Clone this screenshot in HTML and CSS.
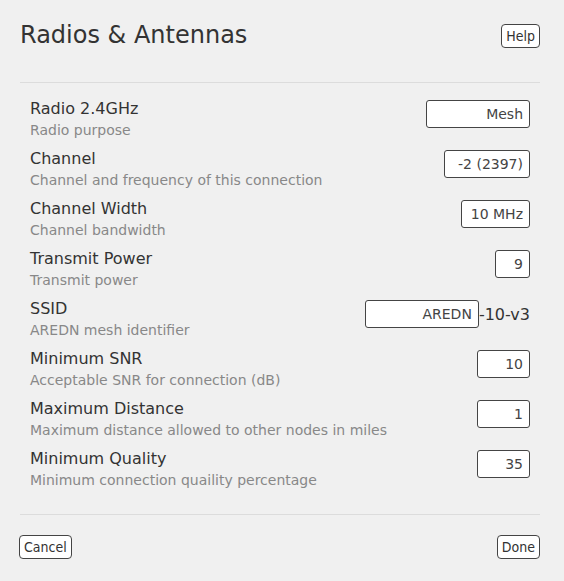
FILE: index.html
```html
<!DOCTYPE html>
<html>
<head>
<meta charset="utf-8">
<link rel="stylesheet" href="styles.css">
</head>
<body>
<div class="dialog">
  <div class="header">
    <div class="title">Radios &amp; Antennas</div>
    <button class="btn">Help</button>
  </div>
  <div class="sep"></div>
  <div class="rows">
    <div class="row">
      <div class="text"><div class="label">Radio 2.4GHz</div><div class="desc">Radio purpose</div></div>
      <div class="ctrl"><div class="field w-mesh">Mesh</div></div>
    </div>
    <div class="row">
      <div class="text"><div class="label">Channel</div><div class="desc">Channel and frequency of this connection</div></div>
      <div class="ctrl"><div class="field w-chan">-2 (2397)</div></div>
    </div>
    <div class="row">
      <div class="text"><div class="label">Channel Width</div><div class="desc">Channel bandwidth</div></div>
      <div class="ctrl"><div class="field w-bw">10 MHz</div></div>
    </div>
    <div class="row">
      <div class="text"><div class="label">Transmit Power</div><div class="desc">Transmit power</div></div>
      <div class="ctrl"><div class="field w-pow">9</div></div>
    </div>
    <div class="row">
      <div class="text"><div class="label">SSID</div><div class="desc">AREDN mesh identifier</div></div>
      <div class="ctrl"><div class="field w-ssid">AREDN</div><span class="suffix">-10-v3</span></div>
    </div>
    <div class="row">
      <div class="text"><div class="label">Minimum SNR</div><div class="desc">Acceptable SNR for connection (dB)</div></div>
      <div class="ctrl"><div class="field w-num">10</div></div>
    </div>
    <div class="row">
      <div class="text"><div class="label">Maximum Distance</div><div class="desc">Maximum distance allowed to other nodes in miles</div></div>
      <div class="ctrl"><div class="field w-num">1</div></div>
    </div>
    <div class="row">
      <div class="text"><div class="label">Minimum Quality</div><div class="desc">Minimum connection quaility percentage</div></div>
      <div class="ctrl"><div class="field w-num">35</div></div>
    </div>
  </div>
  <div class="sep"></div>
  <div class="footer">
    <button class="btn">Cancel</button>
    <button class="btn">Done</button>
  </div>
</div>
</body>
</html>
```
FILE: styles.css
```css
html, body {
  margin: 0;
  padding: 0;
  background: #f0f0f0;
  font-family: "DejaVu Sans", sans-serif;
  color: #333;
}
.dialog {
  padding: 0 24px 0 20px;
}
.header {
  display: flex;
  justify-content: space-between;
  align-items: flex-start;
  padding-top: 20px;
  height: 82px;
  box-sizing: border-box;
}
.title {
  font-size: 24px;
  line-height: 30px;
  color: #333;
}
.btn {
  font-family: "DejaVu Sans Condensed", "DejaVu Sans", sans-serif;
  font-stretch: condensed;
  font-size: 14px;
  color: #333;
  background: #fff;
  border: 1px solid #444;
  border-radius: 4px;
  padding: 0 4px;
  height: 24px;
  line-height: 22px;
  margin: 0;
}
.header .btn {
  margin-top: 4px;
}
.sep {
  height: 1px;
  background: #dcdcdc;
  width: 520px;
}
.rows {
  padding: 15px 10px 0 10px;
  width: 500px;
  height: 416px;
}
.row {
  display: flex;
  justify-content: space-between;
  align-items: flex-start;
  height: 50px;
}
.label {
  font-size: 16px;
  line-height: 22px;
  color: #333;
}
.desc {
  font-size: 14px;
  line-height: 20px;
  color: #888;
}
.ctrl {
  display: flex;
  align-items: center;
  padding-top: 2px;
}
.field {
  box-sizing: border-box;
  height: 28px;
  line-height: 26px;
  border: 1px solid #444;
  border-radius: 3px;
  background: #fff;
  font-size: 14px;
  text-align: right;
  padding: 0 6px;
  color: #444;
}
.w-mesh { width: 104px; }
.w-chan { width: 86px; }
.w-bw { width: 69px; }
.w-pow { width: 35px; }
.w-ssid { width: 114px; }
.w-num { width: 53px; }
.suffix {
  font-size: 16px;
  color: #333;
}
.footer {
  display: flex;
  justify-content: space-between;
  padding-top: 20px;
}
.footer .btn:first-child {
  margin-left: -1px;
}
```
